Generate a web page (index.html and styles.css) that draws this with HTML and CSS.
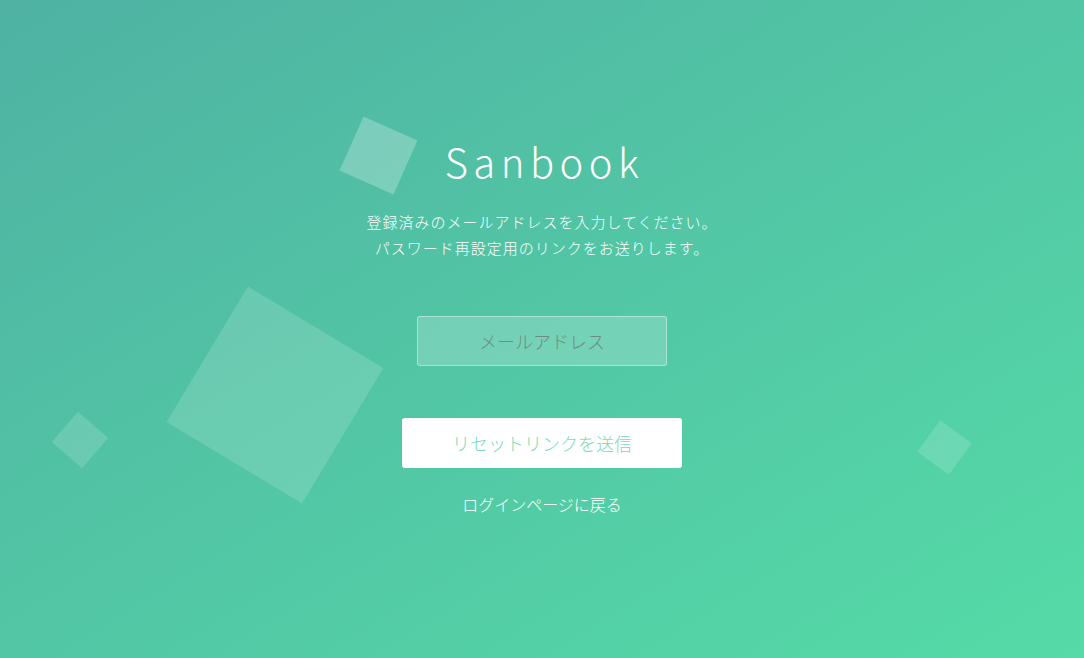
FILE: index.html
```html
<!DOCTYPE html>
<html lang="ja">
<head>
    <meta charset="UTF-8">
    <meta name="viewport" content="width=device-width, initial-scale=1.0">
    <title>Sanbook - パスワード再設定</title>
    <link rel="stylesheet" href="styles.css">
</head>
<body>
    <div class="page">
        <!-- floating squares in the background -->
        <ul class="bg-squares">
            <li class="sq sq-big"></li>
            <li class="sq sq-top"></li>
            <li class="sq sq-left"></li>
            <li class="sq sq-right"></li>
            <li class="sq sq-tiny"></li>
        </ul>

        <div class="wrapper">
            <h1 class="logo">Sanbook</h1>
            <p class="lead">
                登録済みのメールアドレスを入力してください。<br>
                パスワード再設定用のリンクをお送りします。
            </p>

            <form class="reset-form" onsubmit="return false;">
                <input type="email" class="field" placeholder="メールアドレス">
                <button type="submit" class="submit">リセットリンクを送信</button>
            </form>

            <a href="#" class="back">ログインページに戻る</a>
        </div>
    </div>
</body>
</html>
```

FILE: styles.css
```css
body {
    margin: 0;
    padding: 0;
    font-family: "Noto Sans CJK JP", "Noto Sans", sans-serif;
    font-weight: 300;
    color: #ffffff;
}
.page {
    position: relative;
    height: 100vh;
    overflow: hidden;
    background: linear-gradient(to bottom right, #4fb2a3 0%, #55dba7 100%);
}
.wrapper {
    position: relative;
    z-index: 1;
    width: 420px;
    margin: 0 auto;
    padding-top: 132px;
    text-align: center;
}
.logo {
    margin: 0;
    font-size: 40px;
    font-weight: 200;
    line-height: 58px;
    letter-spacing: 5.5px;
    padding-left: 5px;
}
.lead {
    margin: 19px 0 0;
    font-size: 15px;
    line-height: 26px;
    letter-spacing: 1px;
}
.reset-form {
    display: flex;
    flex-direction: column;
    align-items: center;
    margin-top: 55px;
}
.field {
    box-sizing: border-box;
    width: 250px;
    height: 50px;
    padding: 10px 15px;
    border: 1px solid rgba(255, 255, 255, 0.4);
    border-radius: 3px;
    background-color: rgba(255, 255, 255, 0.2);
    font-family: inherit;
    font-size: 18px;
    font-weight: 300;
    color: #ffffff;
    text-align: center;
    outline: none;
}
.field::placeholder {
    color: #6f8c84;
}
.submit {
    box-sizing: border-box;
    width: 280px;
    height: 50px;
    margin-top: 52px;
    border: none;
    border-radius: 3px;
    background-color: #ffffff;
    font-family: inherit;
    font-size: 18px;
    font-weight: 300;
    color: #78dcb5;
    cursor: pointer;
}
.back {
    display: inline-block;
    margin-top: 24px;
    font-size: 16px;
    color: #ffffff;
    text-decoration: none;
}
.bg-squares {
    position: absolute;
    top: 0;
    left: 0;
    width: 100%;
    height: 100%;
    margin: 0;
    padding: 0;
    list-style: none;
}
.sq {
    position: absolute;
    background-color: rgba(255, 255, 255, 0.15);
}
.sq-big {
    left: 196px;
    top: 316px;
    width: 158px;
    height: 158px;
    transform: rotate(31deg);
}
.sq-top {
    left: 349px;
    top: 126px;
    width: 59px;
    height: 59px;
    background-color: rgba(255, 255, 255, 0.25);
    transform: rotate(24deg);
}
.sq-left {
    left: 60px;
    top: 420px;
    width: 40px;
    height: 40px;
    transform: rotate(41deg);
}
.sq-right {
    left: 925px;
    top: 428px;
    width: 39px;
    height: 39px;
    transform: rotate(36deg);
}
.sq-tiny {
    left: 640px;
    top: -18px;
    width: 16px;
    height: 16px;
    transform: rotate(45deg);
}
```
